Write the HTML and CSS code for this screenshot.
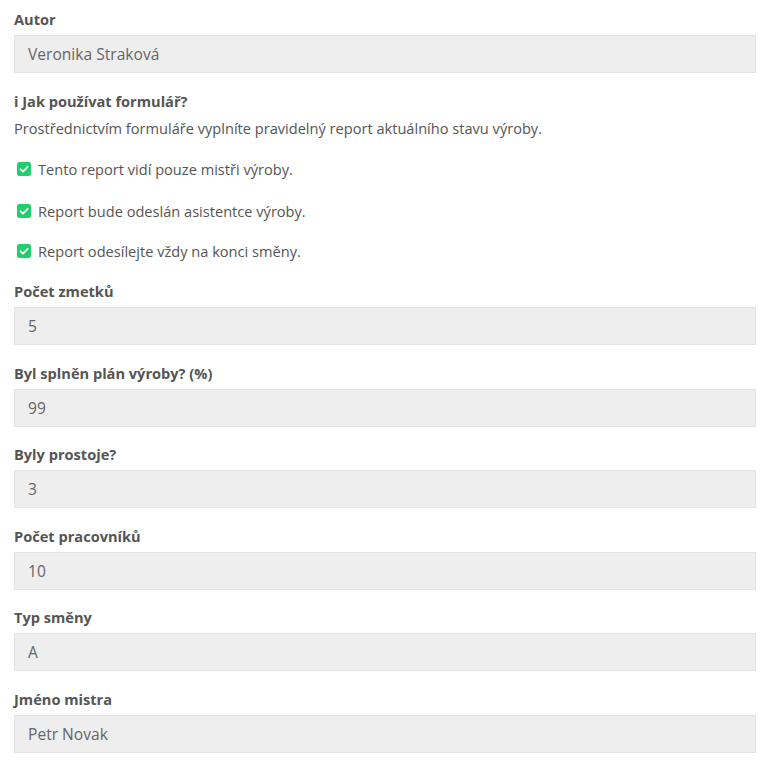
FILE: index.html
```html
<!DOCTYPE html>
<html lang="cs">
<head>
<meta charset="utf-8">
<link rel="stylesheet" href="styles.css">
</head>
<body>
<div class="form">
  <div class="field">
    <label class="label">Autor</label>
    <input class="input" type="text" readonly value="Veronika Straková">
  </div>

  <div class="info">
    <div class="info-title">i Jak používat formulář?</div>
    <p class="info-text">Prostřednictvím formuláře vyplníte pravidelný report aktuálního stavu výroby.</p>
    <ul class="checks">
      <li class="check check-1"><svg class="box" viewBox="0 0 14 14" width="14" height="14"><rect x="0" y="0" width="14" height="14" rx="2.5" fill="#1fcf6b"/><path d="M3.6 7.3 L6 9.6 L10.6 4.8" fill="none" stroke="#fff" stroke-width="1.8" stroke-linecap="round" stroke-linejoin="round"/></svg><span>Tento report vidí pouze mistři výroby.</span></li>
      <li class="check check-2"><svg class="box" viewBox="0 0 14 14" width="14" height="14"><rect x="0" y="0" width="14" height="14" rx="2.5" fill="#1fcf6b"/><path d="M3.6 7.3 L6 9.6 L10.6 4.8" fill="none" stroke="#fff" stroke-width="1.8" stroke-linecap="round" stroke-linejoin="round"/></svg><span>Report bude odeslán asistentce výroby.</span></li>
      <li class="check check-3"><svg class="box" viewBox="0 0 14 14" width="14" height="14"><rect x="0" y="0" width="14" height="14" rx="2.5" fill="#1fcf6b"/><path d="M3.6 7.3 L6 9.6 L10.6 4.8" fill="none" stroke="#fff" stroke-width="1.8" stroke-linecap="round" stroke-linejoin="round"/></svg><span>Report odesílejte vždy na konci směny.</span></li>
    </ul>
  </div>

  <div class="fields">
    <div class="field">
      <label class="label">Počet zmetků</label>
      <input class="input" type="text" readonly value="5">
    </div>
    <div class="field">
      <label class="label">Byl splněn plán výroby? (%)</label>
      <input class="input" type="text" readonly value="99">
    </div>
    <div class="field">
      <label class="label">Byly prostoje?</label>
      <input class="input" type="text" readonly value="3">
    </div>
    <div class="field">
      <label class="label">Počet pracovníků</label>
      <input class="input" type="text" readonly value="10">
    </div>
    <div class="field">
      <label class="label">Typ směny</label>
      <input class="input" type="text" readonly value="A">
    </div>
    <div class="field">
      <label class="label">Jméno mistra</label>
      <input class="input" type="text" readonly value="Petr Novak">
    </div>
  </div>
</div>
</body>
</html>
```

FILE: styles.css
```css
* { box-sizing: border-box; }

html, body {
  margin: 0;
  padding: 0;
  background: #ffffff;
}

body {
  font-family: "Open Sans", "Noto Sans", sans-serif;
  color: #555555;
}

.form {
  padding: 9px 19px 0 14px;
  display: flex;
  flex-direction: column;
}

.field {
  display: flex;
  flex-direction: column;
}

.label {
  font-size: 14.6px;
  font-weight: 700;
  line-height: 20px;
  color: #555555;
  margin-bottom: 6px;
}

.input {
  display: block;
  width: 100%;
  height: 38px;
  margin: 0;
  padding: 0 13px;
  border: 1px solid #e3e3e3;
  border-radius: 0;
  background: #eeeeee;
  font-family: "Open Sans", "Noto Sans", sans-serif;
  font-size: 15.6px;
  color: #666666;
  outline: none;
}

.info {
  margin-top: 18px;
}

.info-title {
  font-size: 14.6px;
  font-weight: 700;
  line-height: 20px;
  color: #555555;
}

.info-text {
  margin: 7px 0 0;
  font-size: 14.6px;
  line-height: 20px;
  color: #555555;
}

.checks {
  list-style: none;
  margin: 0;
  padding: 0;
}

.check {
  display: flex;
  align-items: center;
  gap: 7px;
  padding-left: 3px;
  font-size: 14.6px;
  line-height: 20px;
  color: #555555;
}

.check-1 { margin-top: 21px; }
.check-2 { margin-top: 22px; }
.check-3 { margin-top: 20px; }

.box { flex: none; }

.fields {
  margin-top: 20px;
  display: flex;
  flex-direction: column;
  gap: 17.6px;
}
```
